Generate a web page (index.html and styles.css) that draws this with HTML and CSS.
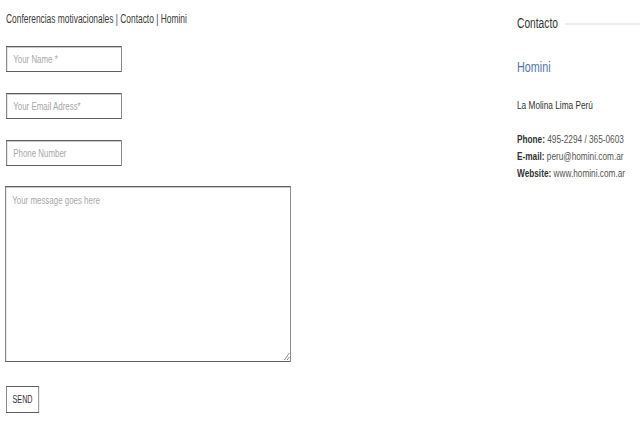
FILE: index.html
```html
<!DOCTYPE html>
<html>
<head>
<meta charset="utf-8">
<link rel="stylesheet" href="styles.css">
</head>
<body>
<div class="page">
  <main class="main">
    <h1 class="crumb">Conferencias motivacionales | Contacto | Homini</h1>
    <form class="form">
      <input class="field" type="text" placeholder="Your Name *">
      <input class="field" type="text" placeholder="Your Email Adress*">
      <input class="field" type="text" placeholder="Phone Number">
      <textarea class="message" placeholder="Your message goes here"></textarea>
      <button class="send" type="button">SEND</button>
    </form>
  </main>
  <aside class="side">
    <div class="side-head">
      <h2 class="side-title">Contacto</h2>
      <span class="rule"></span>
    </div>
    <h3 class="brand">Homini</h3>
    <p class="addr">La Molina Lima Perú</p>
    <p class="info">
      <b>Phone:</b> 495-2294 / 365-0603<br>
      <b>E-mail:</b> peru@homini.com.ar<br>
      <b>Website:</b> www.homini.com.ar
    </p>
  </aside>
</div>
</body>
</html>
```

FILE: styles.css
```css
* { box-sizing: border-box; }
html, body { margin: 0; padding: 0; background: #fff; }
body {
  font-family: "Liberation Sans", Arial, sans-serif;
  color: #333;
}
.page {
  display: flex;
  width: 640px;
  height: 426px;
  overflow: hidden;
}
.main {
  width: 517px;
  flex: none;
  padding: 12px 0 0 6px;
}
/* narrow face emulation: condensed horizontally */
.crumb, .field, .message, .send, .side-head, .brand, .addr, .info {
  transform-origin: 0 50%;
}
.crumb {
  margin: 0;
  font-size: 12px;
  font-weight: normal;
  line-height: 14px;
  color: #3a3a3a;
  white-space: nowrap;
  transform: scaleX(.70);
}
.form {
  display: flex;
  flex-direction: column;
  align-items: flex-start;
  margin-top: 20px;
}
.field {
  width: 161px;
  height: 26px;
  margin: 0 0 21px 0;
  padding: 0 9px;
  border: 1px solid #5f5f5f;
  box-shadow: inset 1px 1px 0 #c8c8c8;
  font-family: inherit;
  font-size: 11px;
  color: #333;
  background: #fff;
  outline: none;
  transform: scaleX(.72);
}
.field::placeholder, .message::placeholder { color: #a8a8a8; }
.message {
  width: 397px;
  height: 176px;
  margin: -1px 0 24px -1px;
  padding: 7px 9px;
  border: 1px solid #5f5f5f;
  box-shadow: inset 1px 1px 0 #c8c8c8;
  font-family: inherit;
  font-size: 11px;
  resize: both;
  outline: none;
  transform: scaleX(.72);
}
.send {
  width: 46px;
  height: 27px;
  margin-left: 0;
  padding: 0;
  border: 1px solid #5f5f5f;
  background: #fff;
  font-family: inherit;
  font-size: 10px;
  color: #3a2d3a;
  transform: scaleX(.72);
}
.side {
  flex: 1;
  padding-top: 14px;
}
.side-head {
  display: flex;
  align-items: center;
  gap: 10px;
  width: 170px;
  transform: scaleX(.73);
}
.side-title {
  margin: 0;
  font-size: 14px;
  font-weight: normal;
  line-height: 18px;
  color: #333;
  white-space: nowrap;
}
.rule {
  flex: 1;
  height: 2px;
  background: #ececec;
  margin-top: 2px;
}
.brand {
  margin: 26px 0 0 0;
  font-size: 15px;
  font-weight: normal;
  line-height: 18px;
  color: #5075ab;
  transform: scaleX(.72);
}
.addr {
  margin: 22px 0 0 0;
  font-size: 11.5px;
  line-height: 14px;
  color: #333;
  white-space: nowrap;
  transform: scaleX(.72);
}
.info {
  margin: 19px 0 0 0;
  font-size: 11px;
  line-height: 17px;
  color: #555;
  white-space: nowrap;
  transform: scaleX(.75);
}
.info b { color: #333; }
```
